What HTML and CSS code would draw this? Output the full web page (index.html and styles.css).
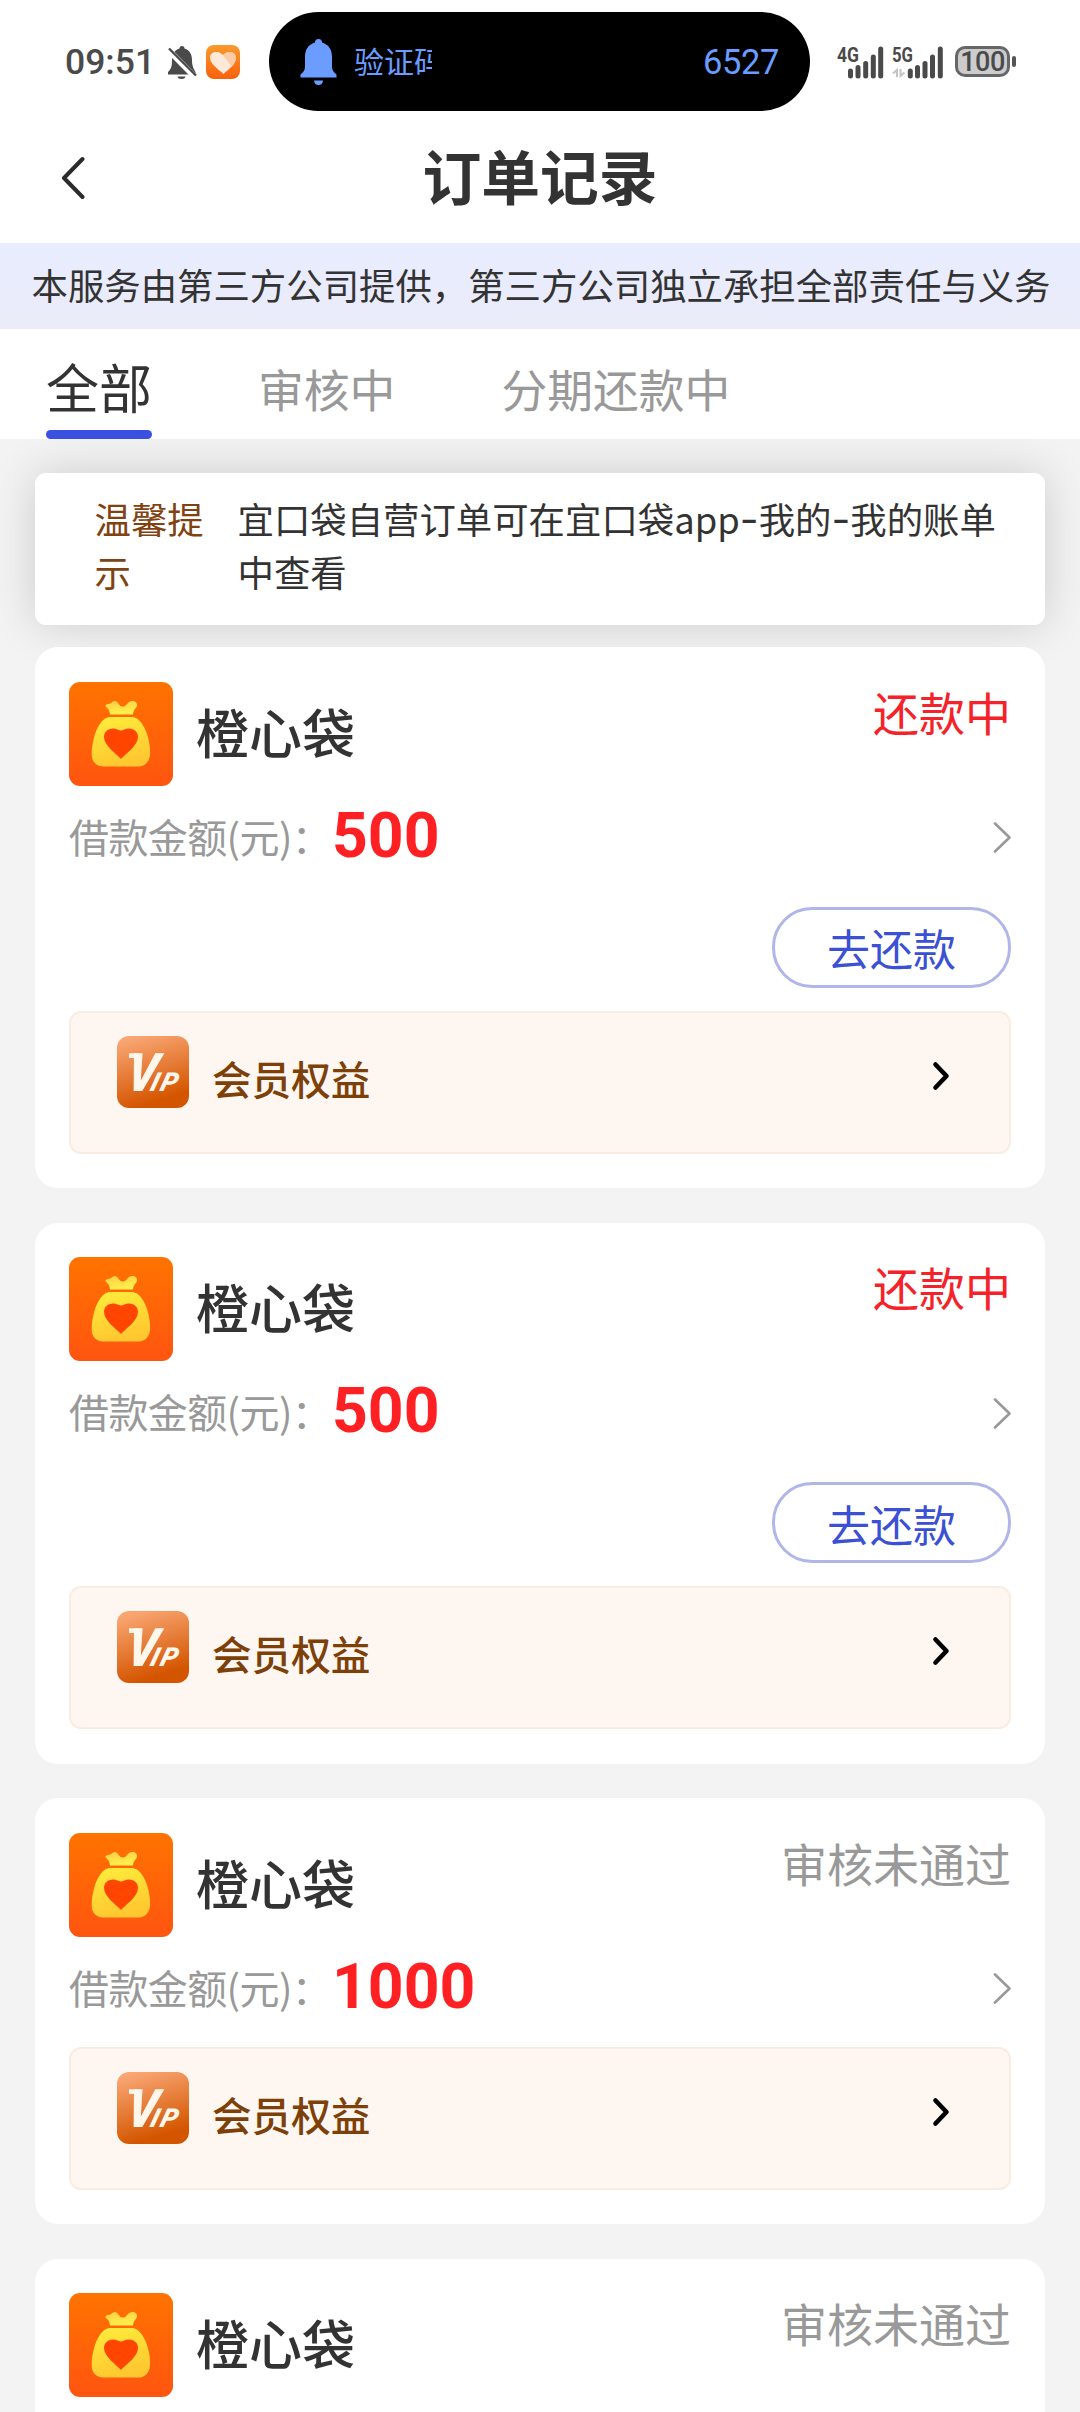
FILE: index.html
```html
<!DOCTYPE html>
<html lang="zh-CN">
<head>
<meta charset="utf-8">
<title>订单记录</title>
<link rel="stylesheet" href="styles.css">
</head>
<body>
<svg class="defs" width="0" height="0">
  <defs>
    <linearGradient id="bagBg" x1="0" y1="0" x2="0" y2="1"><stop offset="0" stop-color="#ff7300"/><stop offset="1" stop-color="#ff5510"/></linearGradient>
    <linearGradient id="bagFill" x1="0" y1="0" x2="0.3" y2="1"><stop offset="0" stop-color="#ffed3c"/><stop offset="1" stop-color="#ffc830"/></linearGradient>
    <linearGradient id="neckFill" x1="0" y1="0" x2="0.3" y2="1"><stop offset="0" stop-color="#ffcd45"/><stop offset="1" stop-color="#fff04a"/></linearGradient>
    <linearGradient id="vipBg" x1="0.3" y1="0" x2="0.6" y2="1"><stop offset="0" stop-color="#f9a673"/><stop offset="0.9" stop-color="#d45500"/></linearGradient>
    <linearGradient id="tileBg" x1="0" y1="0" x2="0" y2="1"><stop offset="0" stop-color="#f99a2b"/><stop offset="1" stop-color="#f9600f"/></linearGradient>
  </defs>
  <symbol id="bag" viewBox="0 0 104 104">
    <rect width="104" height="104" rx="11" fill="url(#bagBg)"/>
    <path d="M41 32.5Q40.500 27 36.500 24.500Q36 22.500 39 22C42.500 22 43 19 46 19C49 19 50 24.500 53.500 24.500C57 24.500 57 22.500 59.500 20.500C63 17.500 68.500 19 68 23.500C67.500 26.500 64.500 27 64 32.500Z" fill="url(#neckFill)"/>
    <path d="M40 35H64C70 36 75 43 78 52C80.500 60 81.500 67 81 73C80.300 80 76 84 70 84.500H34C27 84 23 80 22.700 73C22.500 67 23.500 60 26 52C29 43 34 36 40 35Z" fill="url(#bagFill)"/>
    <path d="M52 77C47 71.500 35 63.500 35 55C35 50 39 46.500 44 46.500C47.500 46.500 50 48.500 52 48.500C54 48.500 56.500 46.500 60 46.500C65 46.500 69 50 69 55C69 63.500 57 71.500 52 77Z" fill="#ff4500"/>
  </symbol>
  <symbol id="vip" viewBox="0 0 72 72">
    <rect width="72" height="72" rx="12" fill="url(#vipBg)"/>
    <path d="M12 17.300H22V22H12Z" fill="#fff6ec"/>
    <text class="vip-v" transform="translate(8 55) skewX(-9)" textLength="30" lengthAdjust="spacingAndGlyphs">V</text>
    <text class="vip-ip" transform="translate(32 55) skewX(-16)">I</text>
    <text class="vip-ip" transform="translate(42 55) skewX(-16)">P</text>
  </symbol>
  <symbol id="more" viewBox="0 0 19 31"><path d="M2 1.500L16.500 15.500L2 29.500" fill="none" stroke="#999" stroke-width="2.600" stroke-linecap="round" stroke-linejoin="round"/></symbol>
  <symbol id="go" viewBox="0 0 18 30"><path d="M3.500 3.500L14.500 15L3.500 26.500" fill="none" stroke="#000" stroke-width="4.600" stroke-linecap="round" stroke-linejoin="round"/></symbol>
</svg>

<header class="status-bar">
  <div class="status-left">
    <span class="clock">09:51</span>
    <svg class="mute" viewBox="0 0 30 34"><path d="M15 1Q17.500 1 17.500 3.500C23 5 25 10 25 15C25 22 27 24 28.500 27V29.500H1V27C4 24 5 22 5 15C5 10 7 5 12.500 3.500Q12.500 1 15 1ZM10.500 31.500H18.500Q18 34 14.500 34Q11 34 10.500 31.500Z" fill="#4a4a4a"/><path d="M1 4.500L28 32" stroke="#fff" stroke-width="6"/><path d="M2 3.500L29 30.500" stroke="#4a4a4a" stroke-width="2.400"/></svg>
    <svg class="tile" viewBox="0 0 34 34"><rect width="34" height="34" rx="8" fill="url(#tileBg)"/><path d="M17.500 29C12 24 4 19 4 12.500C4 9 7 7 10.500 7C14 7 15 9 17 10C19 9 20 7 24 7C27.500 7 30 9.500 30 13C30 19 23 24 17.500 29Z" fill="#ffe9d8"/><path d="M17 10C19 9 20 7 24 7C27.500 7 30 9.500 30 13C30 16 28 19 25.500 21.500Z" fill="#ffcba4"/></svg>
  </div>
  <div class="island">
    <svg class="bell" viewBox="0 0 37 46"><path d="M18.500 0Q22 0 22 3.500C29 5.500 32 11 32 18V28Q32 32 36.500 35.500V38.500H.5V35.500Q5 32 5 28V18C5 11 8 5.500 15 3.500Q15 0 18.500 0ZM14 41.500H23Q22.500 46 18.500 46Q14.500 46 14 41.500Z" fill="#6a9dff"/></svg>
    <span class="island-label">验证码</span>
    <span class="island-code">6527</span>
  </div>
  <div class="status-right">
    <svg class="signal" viewBox="0 0 48 34"><text class="net" x="0" y="17" textLength="22" lengthAdjust="spacingAndGlyphs">4G</text><path d="M13.500 26V31M21 22.500V31M28.700 18.500V31M36.300 12V31M43.700 4V31" class="bars"/></svg>
    <svg class="signal second" viewBox="0 0 53 34"><text class="net" x="0" y="17" textLength="21" lengthAdjust="spacingAndGlyphs">5G</text><path d="M1 28.500L5 25V32M8.500 24V31L12.500 27.500" fill="none" stroke="#c4c4c4" stroke-width="2"/><path d="M18.300 26V31M25.500 22.500V31M33 18.500V31M40.500 12V31M48.300 4V31" class="bars"/></svg>
    <span class="battery">100</span><span class="battery-tip"></span>
  </div>
</header>

<nav class="title-bar">
  <svg class="back" viewBox="0 0 24 44"><path d="M21.500 3L3 22L21.500 41" fill="none" stroke="#2b2b2b" stroke-width="4" stroke-linecap="round" stroke-linejoin="round"/></svg>
  <h1>订单记录</h1>
</nav>

<p class="notice">本服务由第三方公司提供，第三方公司独立承担全部责任与义务</p>

<div class="tabs">
  <span class="tab active">全部</span>
  <span class="tab">审核中</span>
  <span class="tab">分期还款中</span>
</div>

<main>
  <section class="tip">
    <div class="tip-label">温馨提示</div>
    <div class="tip-text">宜口袋自营订单可在宜口袋app<span class="dash">-</span>我的<span class="dash">-</span>我的账单中查看</div>
  </section>

  <article class="card">
    <div class="head"><svg class="logo"><use href="#bag"/></svg><h2>橙心袋</h2><span class="state due">还款中</span></div>
    <div class="amount"><span class="label">借款金额(元)：</span><b>500</b><svg class="more"><use href="#more"/></svg></div>
    <div class="action"><button>去还款</button></div>
    <div class="member"><svg class="vip"><use href="#vip"/></svg><span>会员权益</span><svg class="go"><use href="#go"/></svg></div>
  </article>

  <article class="card">
    <div class="head"><svg class="logo"><use href="#bag"/></svg><h2>橙心袋</h2><span class="state due">还款中</span></div>
    <div class="amount"><span class="label">借款金额(元)：</span><b>500</b><svg class="more"><use href="#more"/></svg></div>
    <div class="action"><button>去还款</button></div>
    <div class="member"><svg class="vip"><use href="#vip"/></svg><span>会员权益</span><svg class="go"><use href="#go"/></svg></div>
  </article>

  <article class="card">
    <div class="head"><svg class="logo"><use href="#bag"/></svg><h2>橙心袋</h2><span class="state">审核未通过</span></div>
    <div class="amount"><span class="label">借款金额(元)：</span><b>1000</b><svg class="more"><use href="#more"/></svg></div>
    <div class="member"><svg class="vip"><use href="#vip"/></svg><span>会员权益</span><svg class="go"><use href="#go"/></svg></div>
  </article>

  <article class="card">
    <div class="head"><svg class="logo"><use href="#bag"/></svg><h2>橙心袋</h2><span class="state">审核未通过</span></div>
  </article>
</main>
</body>
</html>
```
FILE: styles.css
```css
* { box-sizing: border-box; margin: 0; padding: 0; }
html, body { height: 2412px; overflow: hidden; }
body {
  display: flex;
  flex-direction: column;
  width: 1080px;
  background: #f3f3f3;
  color: #333;
  font-family: "Noto Sans CJK SC", sans-serif;
}
svg { display: block; flex: none; }
.defs { position: absolute; }

/* Status bar */
.status-bar {
  flex: none;
  display: grid;
  grid-template-columns: 269px 541px 1fr;
  align-items: center;
  height: 123px;
  background: #fff;
}
.status-left { display: flex; align-items: center; padding-left: 65px; }
.clock { width: 102px; font: 500 35.500px/40px Roboto, sans-serif; color: #4a4a4a; }
.mute { width: 30px; height: 34px; }
.tile { width: 34px; height: 34px; margin-left: 9px; }
.island {
  display: flex;
  align-items: center;
  height: 99px;
  padding: 0 31px;
  border-radius: 50px;
  background: #000;
  color: #6a9dff;
}
.bell { width: 37px; height: 46px; }
.island-label {
  width: 78px;
  margin-left: 17px;
  padding-bottom: 3px;
  overflow: hidden;
  white-space: nowrap;
  font-size: 30px;
  line-height: 44px;
}
.island-code { margin-left: auto; font: 400 34.500px/44px Roboto, sans-serif; letter-spacing: -.4px; }
.status-right { display: flex; align-items: center; padding-left: 27px; }
.signal { width: 48px; height: 34px; }
.signal.second { width: 53px; margin-left: 7px; }
.net { font: 700 20px Roboto, sans-serif; fill: #4a4a4a; }
.bars { fill: none; stroke: #4a4a4a; stroke-width: 5; stroke-linecap: round; }
.battery {
  width: 55px;
  height: 31px;
  margin-left: 10px;
  border: 3px solid #666;
  border-radius: 10px;
  background: #ccc;
  color: #4a4a4a;
  font: 500 27px/26px Roboto, sans-serif;
  letter-spacing: -.5px;
  text-align: center;
}
.battery-tip { width: 4px; height: 11px; margin-left: 2px; border-radius: 2px; background: #555; }

/* Title */
.title-bar {
  flex: none;
  display: grid;
  grid-template-columns: 120px 1fr 120px;
  align-items: center;
  height: 120px;
  padding-bottom: 10px;
  background: #fff;
}
.back { width: 24px; height: 44px; margin-left: 61px; }
h1 { padding-bottom: 7px; font-size: 58.800px; line-height: 80px; font-weight: 700; text-align: center; }

.notice {
  flex: none;
  height: 86px;
  padding-left: 2px;
  background: linear-gradient(#e8edff, #ebebf9);
  font-size: 36.400px;
  line-height: 83px;
  text-align: center;
  white-space: nowrap;
}

/* Tabs */
.tabs {
  flex: none;
  position: relative;
  z-index: 1;
  display: flex;
  gap: 106px;
  height: 110px;
  padding-left: 46px;
  background: #fff;
}
.tab { font-size: 45.800px; line-height: 119px; color: #999; }
.tab.active {
  width: 106px;
  color: #333;
  font-size: 53px;
  line-height: 114px;
}
.tab.active::after {
  content: "";
  display: block;
  height: 9px;
  margin-top: -13px;
  border-radius: 5px;
  background: #3a50e0;
}

main { flex: 1; min-height: 0; padding: 34px 35px 0; overflow: hidden; }

.tip {
  display: flex;
  height: 152px;
  padding: 19px 40px 0 59.500px;
  border-radius: 11px;
  background: #fff;
  box-shadow: 0 0 46px rgba(0, 0, 0, .16);
  font-size: 36.400px;
  line-height: 53px;
}
.tip-label { width: 143px; padding-right: 30px; color: #7f4210; }
.tip-text { flex: 1; }
.dash { font-family: Inter, sans-serif; font-size: 41px; line-height: 1; }

/* Order cards */
.card {
  position: relative;
  height: 541px;
  margin-bottom: 34.500px;
  padding: 34.500px 34px 0;
  border-radius: 23px;
  background: #fff;
}
.tip + .card { margin-top: 22px; }
.card:nth-of-type(3) { height: 426px; }
.head { display: flex; height: 104px; }
.logo { width: 104px; height: 104px; }
h2 { margin-left: 23px; font-size: 53px; font-weight: 500; line-height: 98px; }
.state { margin-left: auto; color: #999; font-size: 46px; line-height: 58px; }
.state.due { color: #f5222a; }
.amount { display: flex; align-items: center; height: 104px; margin-bottom: 6px; }
.label {
  width: 263px;
  padding-bottom: 4px;
  color: #999;
  font-size: 40px;
  line-height: 60px;
  letter-spacing: -.6px;
  white-space: nowrap;
}
.amount b { padding-bottom: 4px; color: #ff2024; font: 700 62.500px/66px Roboto, sans-serif; }
.more { width: 19px; height: 31px; margin: 0 -1px 0 auto; }
.action { display: flex; justify-content: flex-end; height: 115px; padding-top: 11px; }
button {
  width: 239px;
  height: 81px;
  border: 3px solid #b0b6e8;
  border-radius: 40px;
  background: #fff;
  color: #3b50d4;
  font: 400 43px/74px "Noto Sans CJK SC", sans-serif;
}
.member {
  display: flex;
  width: 942px;
  height: 143px;
  padding: 23px 59px 0 46px;
  border: 2px solid #f9ece2;
  border-radius: 12px;
  background: #fef7f1;
  color: #7d4009;
  font-size: 39.600px;
  font-weight: 500;
  line-height: 84px;
}
.vip { width: 72px; height: 72px; margin-right: 23px; }
.vip-v { font: italic 900 53px Roboto, sans-serif; fill: #fff6ec; }
.vip-ip { font: italic 900 26px Roboto, sans-serif; fill: #fff6ec; }
.go { width: 18px; height: 30px; margin: 25px 0 0 auto; }
```
